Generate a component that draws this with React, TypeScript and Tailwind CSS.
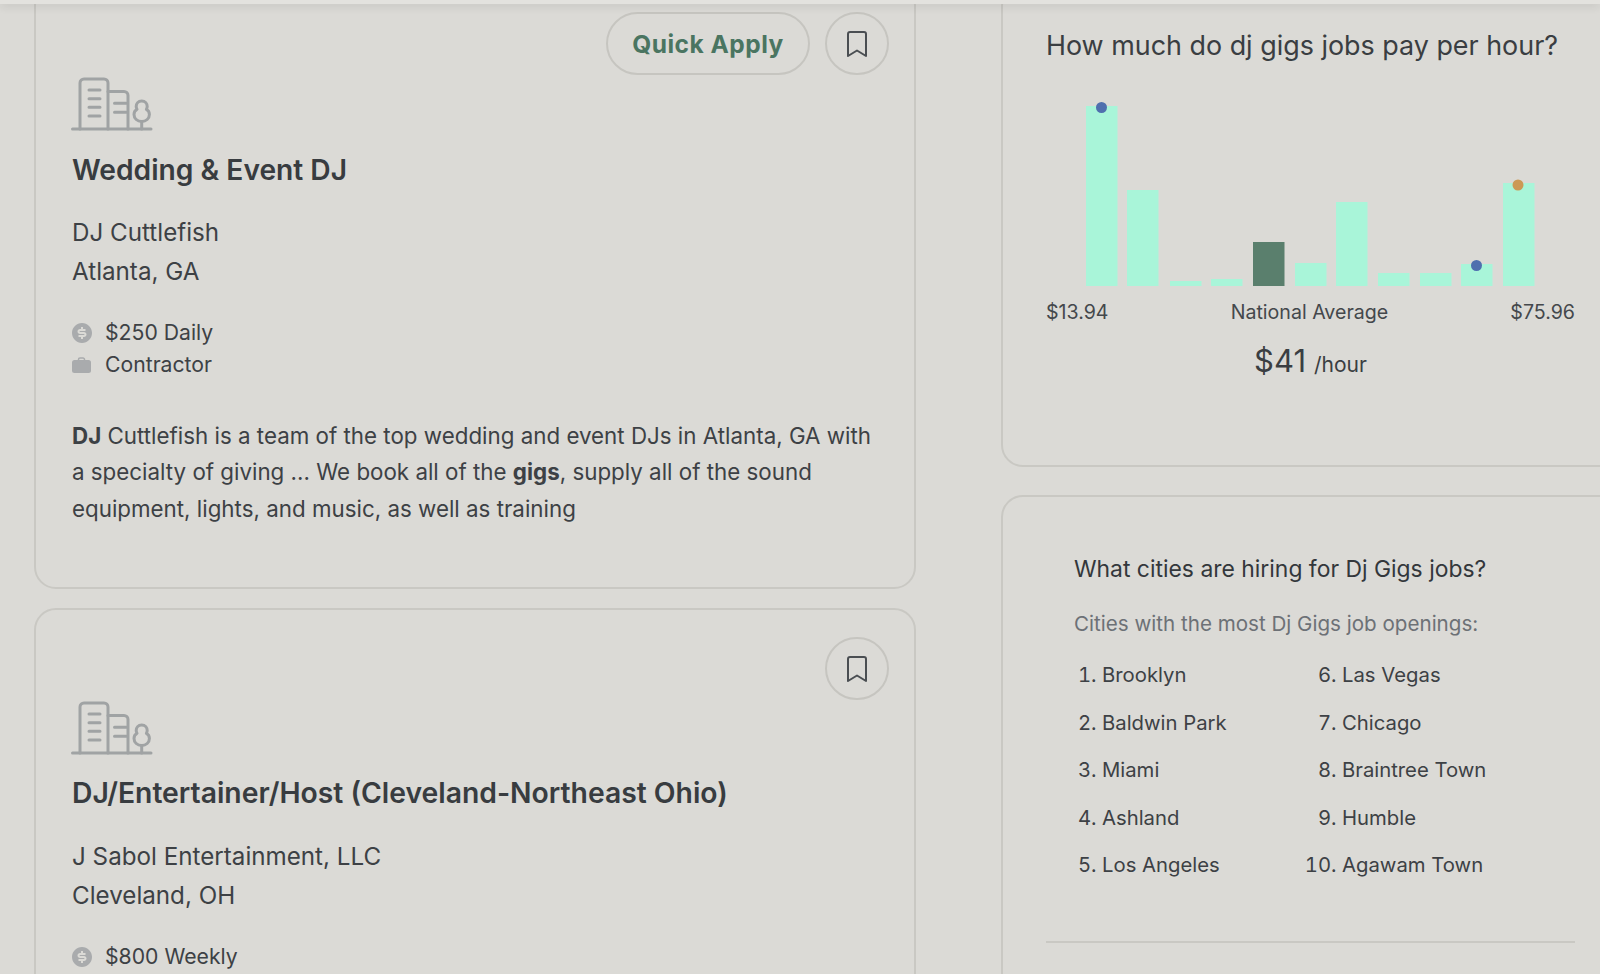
import React from 'react';
import { RiMoneyDollarCircleFill } from 'react-icons/ri';

const bars = [
  { x: 1086, top: 106 },
  { x: 1127, top: 190 },
  { x: 1170, top: 281 },
  { x: 1211, top: 279 },
  { x: 1253, top: 242, active: true },
  { x: 1295, top: 263 },
  { x: 1336, top: 202 },
  { x: 1378, top: 273 },
  { x: 1420, top: 273 },
  { x: 1461, top: 264 },
  { x: 1503, top: 183 },
];

const citiesLeft = ['Brooklyn', 'Baldwin Park', 'Miami', 'Ashland', 'Los Angeles'];
const citiesRight = ['Las Vegas', 'Chicago', 'Braintree Town', 'Humble', 'Agawam Town'];

const CompanyLogo = () => (
  <svg width="83" height="55" viewBox="71 76 83 55" fill="none" stroke="#a0a3a4" strokeWidth="3" strokeLinecap="round" strokeLinejoin="round" className="-ml-[1px] block">
    <path d="M72.5 129H151" />
    <path d="M80 129V83a4 4 0 0 1 4-4h20a4 4 0 0 1 4 4v46" />
    <path d="M108 91.5h16a4 4 0 0 1 4 4V129" />
    <path d="M89 90h11M89 98.7h11M89 107.3h11M89 116h11" />
    <path d="M114.5 103.3h12M114.5 112.3h12" />
    <path d="M141.7 101c-3.600 0-5.500 2.800-5.500 5.500 0 1.200.3 2 .8 2.800-2 1-3 3-3 5.200 0 4 3.300 7 7.700 7s7.700-3 7.700-7c0-2.200-1-4.200-3-5.200.5-.8.8-1.600.8-2.800 0-2.700-1.900-5.500-5.500-5.500z" />
    <path d="M141.700 122v7" />
  </svg>
);

const BookmarkButton = () => (
  <button className="w-[64px] h-[63px] rounded-full border-2 border-[#c6c5c0] flex items-center justify-center shrink-0">
    <svg width="22" height="28" viewBox="0 0 22 28" fill="none" stroke="#4a4e52" strokeWidth="2" strokeLinejoin="round" strokeLinecap="round">
      <path d="M2 26V4a2 2 0 0 1 2-2h14a2 2 0 0 1 2 2v22l-9-5.500z" />
    </svg>
  </button>
);

const Briefcase = () => (
  <svg width="19" height="18" viewBox="0 0 19 18" className="shrink-0">
    <path d="M6.500 5V3.500A1.500 1.500 0 0 1 8 2h3a1.500 1.500 0 0 1 1.500 1.500V5" fill="none" stroke="#a9abad" strokeWidth="1.500" />
    <rect x="0" y="4" width="19" height="13" rx="2.500" fill="#a9abad" />
  </svg>
);

const MetaRow = ({ icon, text }: { icon: React.ReactNode; text: string }) => (
  <div className="flex items-center h-[32px] text-[21.200px] text-[#3d4145]">
    <span className="w-[33px] flex items-center">{icon}</span>
    {text}
  </div>
);

const Dollar = () => <RiMoneyDollarCircleFill className="w-[24px] h-[24px] -ml-[2px] text-[#a9abad]" />;

const App = () => {
  return (
    <div className="h-[974px] w-[1600px] overflow-hidden bg-[#dbdad6] relative font-['Inter',sans-serif] text-[#3a3e42]">
      <div className="absolute top-0 left-0 right-0 h-[4px] bg-[#e3e2de] shadow-[0_2px_8px_rgba(0,0,0,0.14)] z-10"></div>
      <div className="flex items-start pl-[34px] gap-[85px]">
        <div className="w-[882px] shrink-0 flex flex-col gap-[19px] -mt-[17px]">
          <div className="h-[606px] border-2 border-[#c9c8c3] rounded-[22px] pl-[36px] pr-[25px] pt-[27px]">
            <div className="flex justify-end items-center gap-[15px]">
              <button className="w-[204px] h-[63px] rounded-full border-2 border-[#c6c5c0] text-[24.500px] font-bold tracking-[0.5px] text-[#4a7561] pt-[1px]">Quick Apply</button>
              <BookmarkButton />
            </div>
            <div className="mt-[1px]"><CompanyLogo /></div>
            <h3 className="mt-[21px] text-[28.200px] leading-[36px] font-semibold text-[#383c40]">Wedding &amp; Event DJ</h3>
            <div className="mt-[25px] text-[24.200px] leading-[39px] text-[#3d4145]">
              <p>DJ Cuttlefish</p>
              <p>Atlanta, GA</p>
            </div>
            <div className="mt-[26px]">
              <MetaRow icon={<Dollar />} text="$250 Daily" />
              <MetaRow icon={<Briefcase />} text="Contractor" />
            </div>
            <p className="mt-[37px] text-[22.350px] leading-[36.300px] text-[#3d4145]">
              <b className="font-bold">DJ</b> Cuttlefish is a team of the top wedding and event DJs in Atlanta, GA with a specialty of giving ... We book all of the <b className="font-bold">gigs</b>, supply all of the sound equipment, lights, and music, as well as training
            </p>
          </div>
          <div className="h-[500px] border-2 border-[#c9c8c3] rounded-[22px] pl-[36px] pr-[25px] pt-[27px]">
            <div className="flex justify-end items-center">
              <BookmarkButton />
            </div>
            <div className="mt-[0px]"><CompanyLogo /></div>
            <h3 className="mt-[20px] text-[28.300px] leading-[36px] font-semibold text-[#383c40]">DJ/Entertainer/Host (Cleveland-Northeast Ohio)</h3>
            <div className="mt-[26px] text-[24.200px] leading-[39px] text-[#3d4145]">
              <p>J Sabol Entertainment, LLC</p>
              <p>Cleveland, OH</p>
            </div>
            <div className="mt-[26px]">
              <MetaRow icon={<Dollar />} text="$800 Weekly" />
            </div>
          </div>
        </div>

        <div className="w-[640px] shrink-0 flex flex-col gap-[28px] -mt-[16px]">
          <div className="h-[483px] border-2 border-[#c9c8c3] rounded-[22px] pl-[43px] pt-[41px] pr-[64px]">
            <h3 className="text-[26.900px] leading-[36px] text-[#3a3e42] whitespace-nowrap">How much do dj gigs jobs pay per hour?</h3>
            <svg width="530" height="200" viewBox="1046 96 530 200" className="block mt-[33px]">
              {bars.map((b) => (
                <rect key={b.x} x={b.x} y={b.top} width="31.500" height={286 - b.top} fill={b.active ? '#5a7f6d' : '#a9f5d9'} />
              ))}
              <circle cx="1101.500" cy="107.500" r="5.500" fill="#4f6fae" />
              <circle cx="1476.500" cy="265.500" r="5.500" fill="#4f6fae" />
              <circle cx="1518" cy="185" r="5.500" fill="#cc9955" />
            </svg>
            <div className="flex justify-between items-center mt-[2px] text-[19.600px] leading-[28px] text-[#44484c]">
              <span>$13.94</span>
              <span>National Average</span>
              <span>$75.96</span>
            </div>
            <div className="mt-[13px] text-center leading-[44px]">
              <span className="text-[31px] text-[#3a3e42]">$41</span>
              <span className="text-[21px] ml-[8px] text-[#3a3e42]">/hour</span>
            </div>
          </div>

          <div className="h-[520px] border-2 border-[#c9c8c3] rounded-[22px] pl-[43px] pr-[64px] pt-[56px]">
            <div className="pl-[28px]">
              <h3 className="text-[22.900px] leading-[32px] text-[#33373b]">What cities are hiring for Dj Gigs jobs?</h3>
              <p className="mt-[24px] text-[20.600px] leading-[30px] text-[#6d7176]">Cities with the most Dj Gigs job openings:</p>
              <div className="grid grid-cols-[240px_1fr] mt-[12px] text-[20.300px] leading-[47.500px] text-[#3d4145]">
                <ol className="list-decimal pl-[28px]">
                  {citiesLeft.map((c) => <li key={c}>{c}</li>)}
                </ol>
                <ol start={6} className="list-decimal pl-[28px]">
                  {citiesRight.map((c) => <li key={c}>{c}</li>)}
                </ol>
              </div>
            </div>
            <div className="mt-[52px] border-t-2 border-[#c9c8c3]"></div>
          </div>
        </div>
      </div>
    </div>
  );
};

export default App;
